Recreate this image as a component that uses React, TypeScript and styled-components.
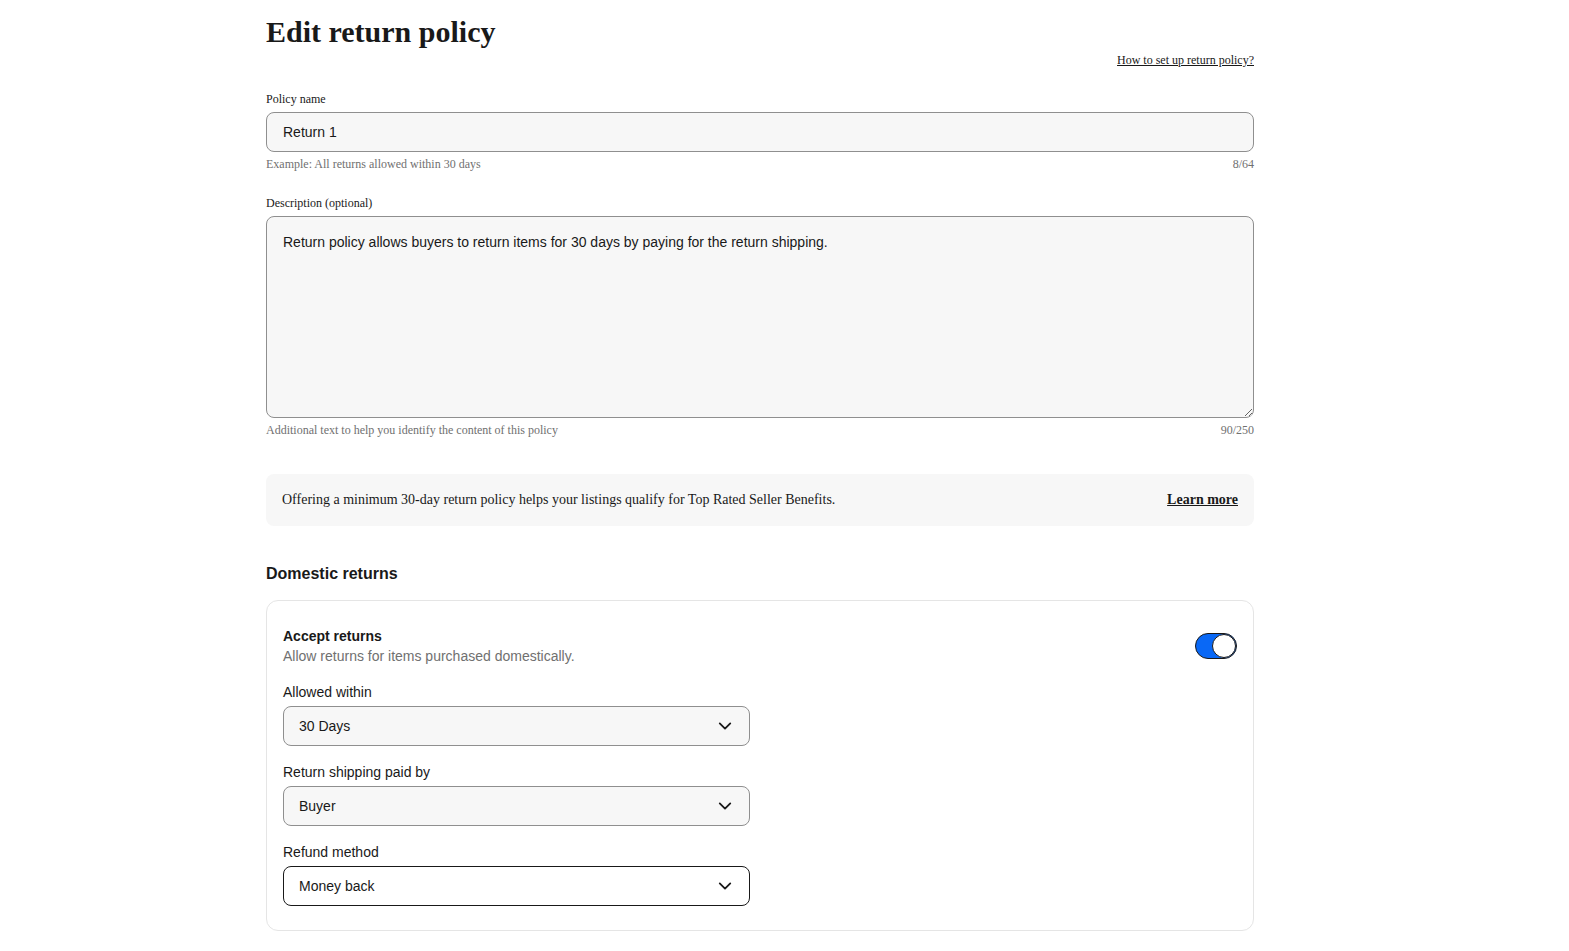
import styled, { createGlobalStyle } from "styled-components";

const GlobalStyle = createGlobalStyle`
    body {
        margin: 0;
        background: #ffffff;
        color: #191919;
        font-family: "Liberation Serif", "Times New Roman", serif;
    }
`;

const Page = styled.div`
    width: 988px;
    margin-left: 266px;
    padding-top: 14px;
    padding-bottom: 40px;
`;

const Title = styled.h1`
    margin: 0;
    font-size: 30px;
    line-height: 36px;
    font-weight: 700;
`;

const HelpRow = styled.div`
    display: flex;
    justify-content: flex-end;
    margin-top: 3px;
`;

const SerifLink = styled.a<{ $bold?: boolean }>`
    color: #191919;
    font-size: ${(p) => (p.$bold ? "14px" : "12px")};
    font-weight: ${(p) => (p.$bold ? 700 : 400)};
    text-decoration: underline;
    cursor: pointer;
`;

const Field = styled.div<{ $top: number }>`
    margin-top: ${(p) => p.$top}px;
    display: flex;
    flex-direction: column;
`;

const SerifLabel = styled.label`
    font-size: 12px;
    line-height: 16px;
    margin-bottom: 5px;
`;

const TextInput = styled.input`
    box-sizing: border-box;
    height: 40px;
    width: 100%;
    padding: 0 16px;
    border: 1px solid #8f8f8f;
    border-radius: 8px;
    background: #f7f7f7;
    font-family: "Liberation Sans", Arial, sans-serif;
    font-size: 14px;
    color: #191919;
    outline: none;
`;

const TextArea = styled.textarea`
    box-sizing: border-box;
    height: 202px;
    width: 100%;
    padding: 16px;
    border: 1px solid #8f8f8f;
    border-radius: 8px;
    background: #f7f7f7;
    font-family: "Liberation Sans", Arial, sans-serif;
    font-size: 14px;
    line-height: 18px;
    color: #191919;
    outline: none;
    resize: vertical;
    display: block;
`;

const HelperRow = styled.div`
    display: flex;
    justify-content: space-between;
    margin-top: 4px;
    font-size: 12px;
    line-height: 16px;
    color: #707070;
`;

const Banner = styled.div`
    margin-top: 36px;
    height: 52px;
    box-sizing: border-box;
    padding: 0 16px;
    border-radius: 8px;
    background: #f7f7f7;
    display: flex;
    align-items: center;
    justify-content: space-between;
    font-size: 14px;
`;

const SectionTitle = styled.h2`
    margin: 36px 0 0;
    font-family: "Liberation Sans", Arial, sans-serif;
    font-size: 16px;
    line-height: 24px;
    font-weight: 700;
`;

const Card = styled.div`
    margin-top: 14px;
    border: 1px solid #e5e5e5;
    border-radius: 12px;
    padding: 25px 16px 24px;
    font-family: "Liberation Sans", Arial, sans-serif;
`;

const CardHead = styled.div`
    display: flex;
    justify-content: space-between;
    align-items: center;
`;

const HeadText = styled.div`
    display: flex;
    flex-direction: column;
`;

const HeadTitle = styled.span`
    font-size: 14px;
    line-height: 20px;
    font-weight: 700;
`;

const HeadSub = styled.span`
    font-size: 14px;
    line-height: 20px;
    color: #707070;
`;

const Toggle = styled.button<{ $on: boolean }>`
    position: relative;
    width: 42px;
    height: 26px;
    border-radius: 13px;
    border: 1px solid #191919;
    background: ${(p) => (p.$on ? "#0968f6" : "#c7c7c7")};
    padding: 0;
    cursor: pointer;
    &::after {
        content: "";
        position: absolute;
        top: 0;
        left: ${(p) => (p.$on ? "16px" : "0")};
        width: 22px;
        height: 22px;
        border-radius: 50%;
        background: #ffffff;
        border: 1px solid #191919;
    }
`;

const SelectField = styled.div<{ $top: number }>`
    margin-top: ${(p) => p.$top}px;
    width: 467px;
    display: flex;
    flex-direction: column;
`;

const SansLabel = styled.label`
    font-size: 14px;
    line-height: 20px;
    margin-bottom: 4px;
`;

const SelectBox = styled.div<{ $focused?: boolean }>`
    box-sizing: border-box;
    height: 40px;
    padding: 0 15px;
    border: 1px solid ${(p) => (p.$focused ? "#191919" : "#8f8f8f")};
    border-radius: 8px;
    background: ${(p) => (p.$focused ? "#ffffff" : "#f7f7f7")};
    display: flex;
    align-items: center;
    justify-content: space-between;
    font-size: 14px;
    cursor: pointer;
    svg {
        width: 18px;
        height: 18px;
    }
`;

const Chevron = () => (
    <svg viewBox="0 0 24 24" fill="none" stroke="#191919" strokeWidth="2.4" strokeLinecap="round" strokeLinejoin="round">
        <path d="M5 8.5l7 7 7-7" />
    </svg>
);

const selects = [
    { label: "Allowed within", value: "30 Days", top: 16 },
    { label: "Return shipping paid by", value: "Buyer", top: 16 },
    { label: "Refund method", value: "Money back", top: 16, focused: true },
];

export default function App() {
    return (
        <>
            <GlobalStyle />
            <Page>
                <Title>Edit return policy</Title>
                <HelpRow>
                    <SerifLink>How to set up return policy?</SerifLink>
                </HelpRow>

                <Field $top={23}>
                    <SerifLabel>Policy name</SerifLabel>
                    <TextInput defaultValue="Return 1" />
                    <HelperRow>
                        <span>Example: All returns allowed within 30 days</span>
                        <span>8/64</span>
                    </HelperRow>
                </Field>

                <Field $top={23}>
                    <SerifLabel>Description (optional)</SerifLabel>
                    <TextArea defaultValue="Return policy allows buyers to return items for 30 days by paying for the return shipping." />
                    <HelperRow>
                        <span>Additional text to help you identify the content of this policy</span>
                        <span>90/250</span>
                    </HelperRow>
                </Field>

                <Banner>
                    <span>Offering a minimum 30-day return policy helps your listings qualify for Top Rated Seller Benefits.</span>
                    <SerifLink $bold>Learn more</SerifLink>
                </Banner>

                <SectionTitle>Domestic returns</SectionTitle>
                <Card>
                    <CardHead>
                        <HeadText>
                            <HeadTitle>Accept returns</HeadTitle>
                            <HeadSub>Allow returns for items purchased domestically.</HeadSub>
                        </HeadText>
                        <Toggle $on aria-label="Accept returns" />
                    </CardHead>
                    {selects.map((s) => (
                        <SelectField key={s.label} $top={s.top}>
                            <SansLabel>{s.label}</SansLabel>
                            <SelectBox $focused={s.focused}>
                                <span>{s.value}</span>
                                <Chevron />
                            </SelectBox>
                        </SelectField>
                    ))}
                </Card>
            </Page>
        </>
    );
}
